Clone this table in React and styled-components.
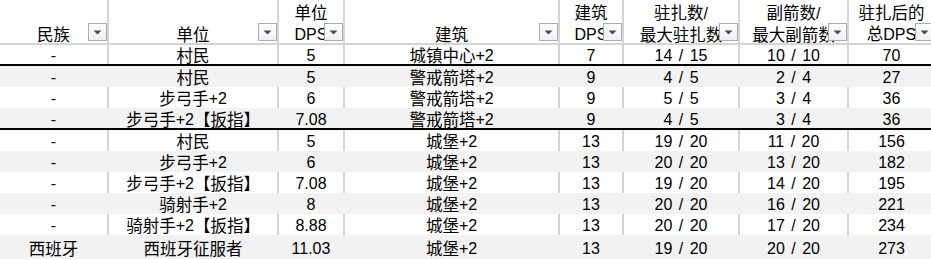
import styled, { createGlobalStyle } from "styled-components";

const GlobalStyle = createGlobalStyle`
  html, body {
    margin: 0;
    padding: 0;
    background: #ffffff;
    overflow: hidden;
  }
`;

const COLS = "109px 170px 66px 215px 64px 116px 109px 87px";
const GRID = "#d4d4d4";
const BAND = "#f2f2f2";

const Sheet = styled.div`
  display: flex;
  flex-direction: column;
  width: 935px;
  height: 100vh;
  font-family: "Noto Sans CJK SC", "Liberation Sans", sans-serif;
  font-size: 16.5px;
  color: #000;
`;

// latin runs use an Arial-width face
const Latin = styled.span`
  font-family: "Liberation Sans", sans-serif;
  font-size: 16px;
  word-spacing: 2px;
`;

const HeaderRow = styled.div`
  display: grid;
  grid-template-columns: ${COLS};
  height: 45px;
  flex: none;
  border-bottom: 2px solid ${GRID};
  box-sizing: border-box;
`;

const HeadCell = styled.div`
  position: relative;
  display: flex;
  flex-direction: column;
  justify-content: flex-end;
  align-items: center;
  border-right: 2px solid ${GRID};
  overflow: hidden;
`;

const HeadLabel = styled.div`
  display: flex;
  flex-direction: column;
  align-items: center;
  margin-bottom: -2px;
  line-height: 21px;
  white-space: nowrap;
`;

const FilterButton = styled.div`
  position: absolute;
  right: 0;
  bottom: 2px;
  width: 19px;
  height: 18px;
  box-sizing: border-box;
  border: 1px solid #a9adb3;
  background: linear-gradient(#fdfdfe, #eef0f3);
  display: flex;
  align-items: center;
  justify-content: center;
`;

const Row = styled.div`
  display: grid;
  grid-template-columns: ${COLS};
  height: ${(p) => (p.$rule ? 22 : 21)}px;
  flex: none;
  box-sizing: border-box;
  background: ${(p) => (p.$shade ? BAND : "#fff")};
  border-bottom: ${(p) => (p.$rule ? "2px solid #000" : "none")};

  &:first-of-type {
    height: 21px;
  }
  &:last-child {
    flex: 1;
  }
`;

const Cell = styled.div`
  display: flex;
  align-items: center;
  justify-content: center;
  padding-top: 2px;
  box-sizing: border-box;
  white-space: nowrap;
  overflow: hidden;
  line-height: 19px;
  border-right: 2px solid ${(p) => (p.$shade ? BAND : GRID)};
`;

const Body = styled.div`
  display: flex;
  flex-direction: column;
  flex: 1;
`;

const headers = [
  ["民族"],
  ["单位"],
  ["单位", "DPS"],
  ["建筑"],
  ["建筑", "DPS"],
  ["驻扎数/", "最大驻扎数"],
  ["副箭数/", "最大副箭数"],
  ["驻扎后的", "总DPS"],
];

const rows = [
  ["-", "村民", "5", "城镇中心+2", "7", "14 / 15", "10 / 10", "70"],
  ["-", "村民", "5", "警戒箭塔+2", "9", "4 / 5", "2 / 4", "27"],
  ["-", "步弓手+2", "6", "警戒箭塔+2", "9", "5 / 5", "3 / 4", "36"],
  ["-", "步弓手+2【扳指】", "7.08", "警戒箭塔+2", "9", "4 / 5", "3 / 4", "36"],
  ["-", "村民", "5", "城堡+2", "13", "19 / 20", "11 / 20", "156"],
  ["-", "步弓手+2", "6", "城堡+2", "13", "20 / 20", "13 / 20", "182"],
  ["-", "步弓手+2【扳指】", "7.08", "城堡+2", "13", "19 / 20", "14 / 20", "195"],
  ["-", "骑射手+2", "8", "城堡+2", "13", "20 / 20", "16 / 20", "221"],
  ["-", "骑射手+2【扳指】", "8.88", "城堡+2", "13", "20 / 20", "17 / 20", "234"],
  ["西班牙", "西班牙征服者", "11.03", "城堡+2", "13", "19 / 20", "20 / 20", "273"],
];

// thick rule after these rows
const ruled = [0, 3];

function Text({ children }) {
  const parts = children.split(/([\x20-\x7e]+)/).filter(Boolean);
  return parts.map((p, i) =>
    /^[\x20-\x7e]+$/.test(p) ? <Latin key={i}>{p}</Latin> : <span key={i}>{p}</span>
  );
}

function Arrow() {
  return (
    <svg width="9" height="5" viewBox="0 0 9 5">
      <polygon points="0.5,0.5 8.5,0.5 4.5,4.5" fill="#4a4a4a" />
    </svg>
  );
}

export default function App() {
  return (
    <>
      <GlobalStyle />
      <Sheet>
        <HeaderRow>
          {headers.map((lines, i) => (
            <HeadCell key={i}>
              <HeadLabel>
                {lines.map((l) => (
                  <span key={l}>
                    <Text>{l}</Text>
                  </span>
                ))}
              </HeadLabel>
              <FilterButton>
                <Arrow />
              </FilterButton>
            </HeadCell>
          ))}
        </HeaderRow>
        <Body>
          {rows.map((r, i) => {
            const shade = i % 2 === 1;
            return (
              <Row key={i} $shade={shade} $rule={ruled.includes(i)}>
                {r.map((v, j) => (
                  <Cell key={j} $shade={shade}>
                    <Text>{v}</Text>
                  </Cell>
                ))}
              </Row>
            );
          })}
        </Body>
      </Sheet>
    </>
  );
}
